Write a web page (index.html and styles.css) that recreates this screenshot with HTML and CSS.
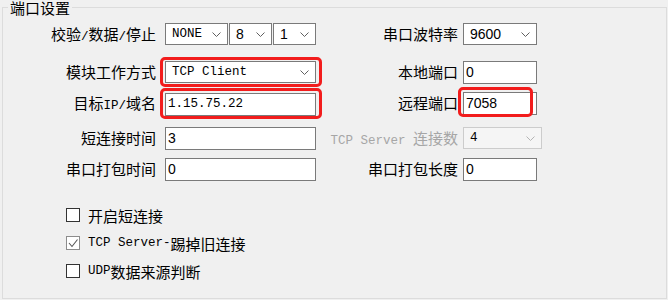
FILE: index.html
```html
<!doctype html>
<html lang="zh-CN">
<head>
    <meta charset="UTF-8">
    <title>端口设置</title>
    <link rel="stylesheet" href="styles.css">
</head>
<body>
    <fieldset class="group">
        <legend>端口设置</legend>

        <div class="grid">
            <!-- 第一行 -->
            <div class="lbl">校验<span class="en">/</span>数据<span class="en">/</span>停止</div>
            <div class="cell">
                <div class="combo w63"><span class="en">NONE</span><svg class="arrow" width="9" height="5"><polyline points="0.5,0.5 4.5,4.5 8.5,0.5"/></svg></div>
                <div class="combo w43"><span class="num">8</span><svg class="arrow" width="9" height="5"><polyline points="0.5,0.5 4.5,4.5 8.5,0.5"/></svg></div>
                <div class="combo w43"><span class="num">1</span><svg class="arrow" width="9" height="5"><polyline points="0.5,0.5 4.5,4.5 8.5,0.5"/></svg></div>
            </div>
            <div class="lbl lbl2">串口波特率</div>
            <div class="cell">
                <div class="combo w74"><span class="num">9600</span><svg class="arrow" width="9" height="5"><polyline points="0.5,0.5 4.5,4.5 8.5,0.5"/></svg></div>
            </div>

            <!-- 第二行 -->
            <div class="lbl">模块工作方式</div>
            <div class="cell">
                <div class="mark mark-a">
                    <div class="combo w151"><span class="en">TCP Client</span><svg class="arrow" width="9" height="5"><polyline points="0.5,0.5 4.5,4.5 8.5,0.5"/></svg></div>
                </div>
            </div>
            <div class="lbl lbl2">本地端口</div>
            <div class="cell"><input class="txt num w74" type="text" value="0"></div>

            <!-- 第三行 -->
            <div class="lbl">目标<span class="en">IP/</span>域名</div>
            <div class="cell">
                <div class="mark mark-b"><input class="txt en w151" type="text" value="1.15.75.22"></div>
            </div>
            <div class="lbl lbl2">远程端口</div>
            <div class="cell">
                <div class="mark mark-c"><input class="txt num w74" type="text" value="7058"></div>
            </div>

            <!-- 第四行 -->
            <div class="lbl">短连接时间</div>
            <div class="cell"><input class="txt num w151" type="text" value="3"></div>
            <div class="lbl lbl2 off"><span class="en">TCP Server </span>连接数</div>
            <div class="cell">
                <div class="combo w79 disabled"><span class="en">4</span><svg class="arrow" width="9" height="5"><polyline points="0.5,0.5 4.5,4.5 8.5,0.5"/></svg></div>
            </div>

            <!-- 第五行 -->
            <div class="lbl">串口打包时间</div>
            <div class="cell"><input class="txt num w151" type="text" value="0"></div>
            <div class="lbl lbl2">串口打包长度</div>
            <div class="cell"><input class="txt num w74" type="text" value="0"></div>
        </div>

        <div class="checks">
            <div class="chk"><span class="box"></span>开启短连接</div>
            <div class="chk"><span class="box on"><svg width="12" height="12"><polyline points="2,6 5,9.5 10.5,2.5"/></svg></span><span class="en">TCP Server-</span>踢掉旧连接</div>
            <div class="chk"><span class="box"></span><span class="en">UDP</span>数据来源判断</div>
        </div>
    </fieldset>
</body>
</html>
```

FILE: styles.css
```css
*{padding: 0; margin: 0; box-sizing: border-box;}
html, body{width: 668px; height: 300px; overflow: hidden;}
body{background: #f0f0f0; color: #000; font-family: "Noto Sans CJK SC", sans-serif; font-size: 15px;}

.group{margin-left: 2px; width: 665px; height: 299px; border: 1px solid #dcdcdc;}
.group legend{margin-left: 5px; padding: 0 2px; line-height: 15px; font-size: 15px;}

.en{font-family: "Liberation Mono", monospace; font-size: 12.5px;}
.num{font-family: "Liberation Sans", Arial, sans-serif; font-size: 14px;}

.grid{display: grid; grid-template-columns: 162px 151px 147px 80px; grid-template-rows: 38px 31px 35px 31px 24px; padding-top: 7px;}
.lbl{height: 24px; line-height: 24px; text-align: right; padding-right: 9px; white-space: nowrap;}
.lbl2{padding-right: 5px;}
.off{color: #a6a6a6;}
.cell{height: 24px; display: flex; align-items: center; gap: 1px;}

.combo{height: 22px; display: flex; align-items: center; justify-content: space-between; padding: 0 6px 0 6px; border: 1px solid #7a7a7a; background: #fff; line-height: 20px;}
.combo .arrow{fill: none; stroke: #606060; stroke-width: 1;}
.combo.disabled{border-color: #cccccc; background: #f5f5f5;}
.combo.disabled .arrow{stroke: #b4b4b4;}

.txt{height: 23px; border: 1px solid #7a7a7a; background: #fff; padding: 0 2px; color: #000; outline: none;}

.w43{width: 43px;}
.w63{width: 63px;}
.w74{width: 74px;}
.w79{width: 79px;}
.w151{width: 151px;}

.mark{position: relative;}
.mark::after{content: ''; position: absolute; border: 3px solid #f21c1c; border-radius: 5px; pointer-events: none;}
.mark-a::after{left: -5px; top: -4px; right: -6px; bottom: -4px;}
.mark-b::after{left: -5px; top: -2px; right: -6px; bottom: -3px;}
.mark-c::after{left: -5px; top: -4px; right: 4px; bottom: -2px;}

.checks{margin-top: 20px; padding-left: 63px; display: flex; flex-direction: column;}
.chk{height: 28px; display: flex; align-items: center;}
.box{width: 14px; height: 14px; margin-right: 8px; border: 1px solid #333; background: #fff; display: flex; align-items: center; justify-content: center;}
.box.on{border-color: #8c8c8c;}
.box svg{fill: none; stroke: #555; stroke-width: 1.1;}
```
